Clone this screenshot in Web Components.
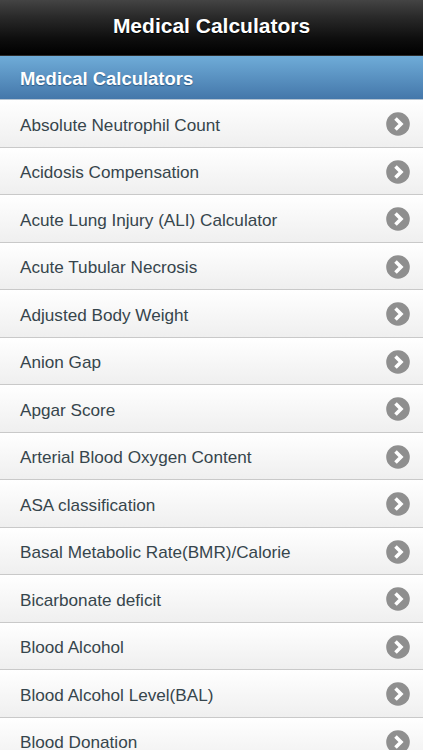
<!DOCTYPE html>
<html>
<head>
<meta charset="utf-8">
<style>
  html, body { margin: 0; padding: 0; height: 750px; overflow: hidden; background: #f2f2f2; }
  body { font-family: "Liberation Sans", Arial, sans-serif; }
</style>
</head>
<body>
<app-header>Medical Calculators</app-header>
<list-divider>Medical Calculators</list-divider>
<calc-list id="list"></calc-list>

<script>
// ==================================================
// TOP BAR
// ==================================================
class AppHeader extends HTMLElement {
  constructor() {
    super();
    this.attachShadow({ mode: "open" });
    this.shadowRoot.innerHTML = `
      <style>
        :host {
          display: flex;
          align-items: center;
          justify-content: center;
          box-sizing: border-box;
          height: 56px;
          padding-bottom: 3px;
          background: linear-gradient(#444444 0%, #2a2a2a 30%, #0e0e0e 70%, #000 100%);
          border-bottom: 1px solid #2b2b2b;
          color: #fff;
          font-size: 21px;
          font-weight: bold;
          text-shadow: 0 1px 1px #000;
        }
      </style>
      <slot></slot>
    `;
  }
}
customElements.define("app-header", AppHeader);

// ==================================================
// BLUE SECTION BAR
// ==================================================
class ListDivider extends HTMLElement {
  constructor() {
    super();
    this.attachShadow({ mode: "open" });
    this.shadowRoot.innerHTML = `
      <style>
        :host {
          display: flex;
          align-items: center;
          box-sizing: border-box;
          height: 44px;
          padding: 2px 20px 0;
          background: linear-gradient(#6facd8, #4477aa);
          border-bottom: 1px solid #b5c4d2;
          color: #fff;
          font-size: 18.45px;
          font-weight: bold;
          text-shadow: 0 1px 1px #2c5a85;
        }
      </style>
      <slot></slot>
    `;
  }
}
customElements.define("list-divider", ListDivider);

// ==================================================
// ROW
// ==================================================
class CalcRow extends HTMLElement {
  constructor() {
    super();
    this.attachShadow({ mode: "open" });
    this.shadowRoot.innerHTML = `
      <style>
        :host {
          display: flex;
          align-items: center;
          justify-content: space-between;
          box-sizing: border-box;
          height: 47.5px;
          padding: 1.5px 13px 0 20px;
          background: linear-gradient(#ffffff, #efefef);
          border-bottom: 1px solid #c9c9c9;
          color: #36454c;
          font-size: 17.15px;
        }
        .label { padding-top: 2.5px; }
        svg { display: block; flex: none; }
      </style>
      <span class="label"><slot></slot></span>
      <svg width="24" height="24" viewBox="0 0 24 24">
        <circle cx="12" cy="12" r="11.8" fill="#8f8f8f"/>
        <path d="M9.5 6.5 L15 12 L9.5 17.5" fill="none" stroke="#fff" stroke-width="3.6" stroke-linecap="butt" stroke-linejoin="miter"/>
      </svg>
    `;
  }
}
customElements.define("calc-row", CalcRow);

// ==================================================
// LIST
// ==================================================
class CalcList extends HTMLElement {
  constructor() {
    super();
    this.attachShadow({ mode: "open" });
    const items = [
      "Absolute Neutrophil Count",
      "Acidosis Compensation",
      "Acute Lung Injury (ALI) Calculator",
      "Acute Tubular Necrosis",
      "Adjusted Body Weight",
      "Anion Gap",
      "Apgar Score",
      "Arterial Blood Oxygen Content",
      "ASA classification",
      "Basal Metabolic Rate(BMR)/Calorie",
      "Bicarbonate deficit",
      "Blood Alcohol",
      "Blood Alcohol Level(BAL)",
      "Blood Donation"
    ];
    this.shadowRoot.innerHTML = `
      <style>:host { display: block; }</style>
      ${items.map(t => `<calc-row>${t}</calc-row>`).join("")}
    `;
  }
}
customElements.define("calc-list", CalcList);
</script>
</body>
</html>
